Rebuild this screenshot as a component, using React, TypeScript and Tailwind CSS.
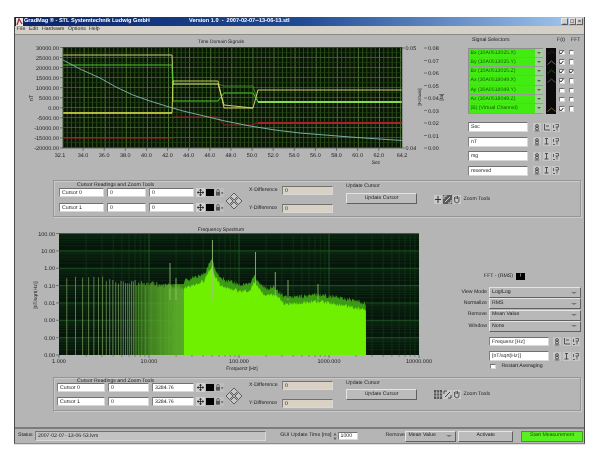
import React from 'react';

const rnd = (i: number) => {
  const s = Math.sin(i * 127.1) * 43758.5453;
  return s - Math.floor(s);
};

const range = (from: number, to: number, step: number) => {
  const out: number[] = [];
  for (let v = from; v <= to + 0.001; v += step) out.push(v);
  return out;
};

// Time chart helpers, all in page pixels
const timeX = (v: number) => 63 + (v - 32.1) * 10.56;
const timeTicks = [34, 36, 38, 40, 42, 44, 46, 48, 50, 52, 54, 56, 58, 60, 62];
const yLabels = ['30000.00', '25000.00', '20000.00', '15000.00', '10000.00', '5000.00', '0.00', '-5000.00', '-10000.00', '-15000.00', '-20000.00'];
const scaleB = ['0.08', '0.07', '0.06', '0.05', '0.04', '0.03', '0.02', '0.01', '0.00'];

function TimeChart() {
  return (
    <svg width="440" height="145" viewBox="15 35 440 145" className="shrink-0">
      <text x="221" y="43" textAnchor="middle" fontSize="4.9" fill="#222">Time Domain Signals</text>
      <rect x="63" y="47.5" width="339" height="100.5" fill="#0a1605" />
      {range(63, 402, 4.22).map((x, i) => (
        <line key={i} x1={x} x2={x} y1="47.5" y2="148" stroke={i % 5 === 0 ? '#6c9c44' : '#3c6622'} strokeWidth="0.7" />
      ))}
      {range(47.5, 148, 5).map((y, i) => (
        <line key={i} x1="63" x2="402" y1={y} y2={y} stroke={i % 2 === 0 ? '#3d7a2a' : '#1e4012'} strokeWidth="0.7" />
      ))}
      <g fill="none" strokeLinejoin="round">
        <polyline points="173,84 218,84 224,86 253,86 258,102 402,102" stroke="#3f8f20" strokeWidth="0.9" />
        <polyline points="63,55 172,55 173,84 218,84 224,105 253,108 258,90 402,90" stroke="#cfcf70" strokeWidth="1" />
        <polyline points="63,65 172,65 173,101 218,101 224,93 253,93 258,102 402,102" stroke="#48c828" strokeWidth="1" />
        <line x1="258" x2="402" y1="102" y2="102" stroke="#a8f060" strokeWidth="1.6" />
        <line x1="63" x2="172" y1="113" y2="113" stroke="#e8e850" strokeWidth="1.5" />
        <polyline points="172,113 173,81 218,81 224,108 253,108" stroke="#dcdc60" strokeWidth="0.9" />
        <line x1="63" x2="172" y1="138" y2="138" stroke="#a02020" strokeWidth="1" />
        <polyline points="174,117 218,117 224,125 253,125 257,123 402,123" stroke="#8c2020" strokeWidth="1" />
        <line x1="258" x2="402" y1="123" y2="123" stroke="#a82424" strokeWidth="2" />
        <polyline points="63,60 80,69 100,78 116,87 133,95 150,101 166,106 183,111 200,115 225,121 250,126 275,130 300,133 350,137 402,140.5" stroke="#7fbab4" strokeWidth="0.9" />
      </g>
      <rect x="63" y="47.5" width="339" height="100.5" fill="none" stroke="#222" strokeWidth="0.5" />
      {yLabels.map((l, i) => {
        const y = 47.5 + i * 10.05;
        return (
          <g key={l}>
            <line x1="60" x2="63" y1={y} y2={y} stroke="#444" strokeWidth="0.6" />
            <text x="59" y={y + 2} textAnchor="end" fontSize="5.5" fill="#222">{l}</text>
          </g>
        );
      })}
      <text x="60" y="156.5" textAnchor="middle" fontSize="5.5" fill="#222">32.1</text>
      <text x="402" y="156.5" textAnchor="middle" fontSize="5.5" fill="#222">64.2</text>
      {timeTicks.map((v) => (
        <g key={v}>
          <line x1={timeX(v)} x2={timeX(v)} y1="148" y2="151" stroke="#444" strokeWidth="0.6" />
          <text x={timeX(v)} y="156.5" textAnchor="middle" fontSize="5.5" fill="#222">{v.toFixed(1)}</text>
        </g>
      ))}
      <text x="376" y="164" textAnchor="middle" fontSize="5" fill="#222">Sec</text>
      <text transform="translate(33,98) rotate(-90)" textAnchor="middle" fontSize="5.5" fill="#222">nT</text>
      <line x1="402" x2="405" y1="48" y2="48" stroke="#444" strokeWidth="0.6" />
      <line x1="402" x2="405" y1="148" y2="148" stroke="#444" strokeWidth="0.6" />
      <text x="405.5" y="50" fontSize="5.5" fill="#222">0.05</text>
      <text x="405.5" y="150" fontSize="5.5" fill="#222">0.04</text>
      {scaleB.map((l, i) => (
        <g key={l}>
          <line x1="424" x2="427" y1={48 + i * 12.5} y2={48 + i * 12.5} stroke="#444" strokeWidth="0.6" />
          <text x="428" y={50 + i * 12.5} fontSize="5.5" fill="#222">{l}</text>
        </g>
      ))}
      <text transform="translate(421,97) rotate(-90)" textAnchor="middle" fontSize="4.4" fill="#222">[Hz/axis]</text>
      <text transform="translate(443,97) rotate(-90)" textAnchor="middle" fontSize="5" fill="#222">[ta]</text>
    </svg>
  );
}

// Spectrum chart helpers
const freqX = (f: number) => 59 + 90 * Math.log10(f);
const envelope: [number, number][] = [
  [184, 284], [195, 281], [204, 277], [209, 268], [212, 262], [215, 272], [220, 282], [230, 285], [240, 288], [250, 287],
  [254, 279], [258, 284], [265, 292], [275, 291], [285, 301], [300, 300], [318, 298], [340, 301], [366, 307],
];

function envelopeAt(x: number) {
  for (let i = 0; i < envelope.length - 1; i++) {
    const [x0, y0] = envelope[i];
    const [x1, y1] = envelope[i + 1];
    if (x >= x0 && x <= x1) return y0 + ((x - x0) / (x1 - x0)) * (y1 - y0);
  }
  return 307;
}

const xs = range(184, 366, 0.6);
const darkEdge = `184,355 ${xs.map((x, i) => `${x},${envelopeAt(x) - 1 - rnd(i) * 5}`).join(' ')} 366,355`;
const brightFill = `184,355 ${xs.map((x, i) => `${x},${envelopeAt(x) + 1.5 + rnd(i + 400) * 4}`).join(' ')} 366,355`;
const harmonics = range(4, 80, 1).map((k) => ({ x: freqX(0.305 * k), k })).filter((h) => h.x < 184);
const spikes: [number, number][] = [[212.5, 240], [255.5, 252], [170, 263], [275.3, 272], [288, 280], [318, 284], [176, 278]];
const freqLabels = ['100.00', '10.00', '1.00', '0.10', '0.01', '0.00', '0.00', '0.00'];
const freqTicks = ['1.000', '10.000', '100.000', '1000.000', '10000.000'];
const logSteps = [2, 3, 4, 5, 6, 7, 8, 9];

function SpectrumChart() {
  return (
    <svg width="440" height="160" viewBox="15 217 440 160" className="shrink-0">
      <defs>
        <linearGradient id="dense" x1="0" x2="1" y1="0" y2="0">
          <stop offset="0" stopColor="#2a6a10" stopOpacity="0" />
          <stop offset="1" stopColor="#3e9a10" stopOpacity="0.9" />
        </linearGradient>
      </defs>
      <text x="221" y="231" textAnchor="middle" fontSize="5" fill="#222">Frequency Spectrum</text>
      <rect x="59" y="233.5" width="360" height="121.5" fill="#06160a" />
      {[0, 1, 2, 3].map((d) =>
        logSteps.map((m) => {
          const x = 59 + 90 * (d + Math.log10(m));
          return <line key={`${d}-${m}`} x1={x} x2={x} y1="233.5" y2="355" stroke="#173f1a" strokeWidth="0.6" />;
        }),
      )}
      {[0, 1, 2, 3, 4, 5, 6].map((d) => (
        <g key={d}>
          {logSteps.map((m) => {
            const y = 233.5 + 17.36 * (d + 1 - Math.log10(m));
            return <line key={m} x1="59" x2="419" y1={y} y2={y} stroke="#12361a" strokeWidth="0.5" />;
          })}
          <line x1="59" x2="419" y1={233.5 + 17.36 * d} y2={233.5 + 17.36 * d} stroke="#2a6a2e" strokeWidth="0.7" />
        </g>
      ))}
      {[149, 239, 329].map((x) => (
        <line key={x} x1={x} x2={x} y1="233.5" y2="355" stroke="#2a6a2e" strokeWidth="0.7" />
      ))}
      <polygon points="125,285 184,284 184,355 125,355" fill="url(#dense)" />
      {harmonics.map(({ x, k }) => (
        <line key={k} x1={x} x2={x} y1={272 + (x - 59) * 0.1 + rnd(k) * 6} y2="355" stroke={k < 24 ? '#7fa860' : '#62b030'} strokeWidth="0.7" />
      ))}
      <polygon points={darkEdge} fill="#3c9a14" />
      <polygon points={brightFill} fill="#6ef000" />
      {spikes.map(([x, y]) => (
        <line key={x} x1={x} x2={x} y1={y} y2="300" stroke="#9cc878" strokeWidth="0.8" />
      ))}
      {freqLabels.map((l, i) => {
        const y = 233.5 + i * 17.36;
        return (
          <g key={i}>
            <line x1="56" x2="59" y1={y} y2={y} stroke="#444" strokeWidth="0.6" />
            <text x="55" y={y + 2} textAnchor="end" fontSize="5.5" fill="#222">{l}</text>
          </g>
        );
      })}
      {freqTicks.map((l, i) => (
        <g key={l}>
          <line x1={59 + i * 90} x2={59 + i * 90} y1="355" y2="358" stroke="#444" strokeWidth="0.6" />
          <text x={59 + i * 90} y="363" textAnchor="middle" fontSize="5.5" fill="#222">{l}</text>
        </g>
      ))}
      {[0, 1, 2, 3].map((d) =>
        logSteps.map((m) => {
          const x = 59 + 90 * (d + Math.log10(m));
          return <line key={`${d}-${m}`} x1={x} x2={x} y1="355" y2="357" stroke="#555" strokeWidth="0.5" />;
        }),
      )}
      <text x="242" y="370" textAnchor="middle" fontSize="5" fill="#222">Frequenz [Hz]</text>
      <text transform="translate(37,295) rotate(-90)" textAnchor="middle" fontSize="4.9" fill="#222">[nT/sqrt(Hz)]</text>
    </svg>
  );
}

const sunken = 'border-t border-l border-t-[#707070] border-l-[#808080] border-r border-b border-r-[#d8d8d8] border-b-[#d8d8d8]';
const raised = 'border-t border-l border-t-[#e4e4e4] border-l-[#e4e4e4] border-r border-b border-r-[#606060] border-b-[#606060]';

function Field({ value, className }: { value: string; className: string }) {
  return (
    <div className={`flex items-center px-[2px] pt-[1.5px] bg-white whitespace-nowrap ${sunken} ${className}`}>{value}</div>
  );
}

function Check({ on }: { on?: boolean }) {
  return (
    <div className={`w-[5.5px] h-[5.5px] bg-white flex items-center justify-center ${sunken}`}>
      {on && (
        <svg width="5" height="5" viewBox="0 0 5 5" className="shrink-0">
          <path d="M0.6 2.4 L2 3.9 L4.4 0.9" fill="none" stroke="#222" strokeWidth="1" />
        </svg>
      )}
    </div>
  );
}

// Small plot-legend buttons beside the axis name fields
function AxisButtons({ first }: { first?: boolean }) {
  return (
    <div className="flex gap-[1.5px] items-center">
      <svg width="8" height="9" viewBox="0 0 8 9" className="shrink-0">
        <rect width="8" height="9" fill="#c6c6c6" />
        <circle cx="4" cy="3" r="1.4" fill="none" stroke="#333" strokeWidth="0.8" />
        <circle cx="4" cy="5.6" r="1.5" fill="none" stroke="#333" strokeWidth="0.8" />
        <line x1="1.5" x2="6.5" y1="8" y2="8" stroke="#333" strokeWidth="0.7" />
      </svg>
      <svg width="8" height="9" viewBox="0 0 8 9" className="shrink-0">
        <rect width="8" height="9" fill="#c6c6c6" />
        <path d={first ? 'M1.5 1 V7 H7 M3 3 H6' : 'M2 1.5 H5 M3.5 1.5 V7 M1.5 7 H5.5'} fill="none" stroke="#333" strokeWidth="0.8" />
      </svg>
      <svg width="8" height="9" viewBox="0 0 8 9" className="shrink-0">
        <rect width="8" height="9" fill="#c6c6c6" />
        <path d="M1.5 2 V5 M3.5 1.5 H6.5 V4 H3.5 M5 4 V7.5 M1 7.5 H3" fill="none" stroke="#333" strokeWidth="0.7" />
      </svg>
    </div>
  );
}

function CursorTools() {
  return (
    <div className="flex items-center gap-[0.5px] ml-[2px] shrink-0">
      <svg width="9" height="9" viewBox="0 0 9 9" className="shrink-0">
        <rect width="9" height="9" fill="#d0d0d0" />
        <path d="M4.5 1 V8 M1 4.5 H8 M3.2 2.2 H5.8 M3.2 6.8 H5.8 M2.2 3.2 V5.8 M6.8 3.2 V5.8" stroke="#222" strokeWidth="0.8" fill="none" />
      </svg>
      <div className="w-[8px] h-[7px] bg-black mx-[0.5px]" />
      <svg width="9" height="9" viewBox="0 0 9 9" className="shrink-0">
        <rect width="9" height="9" fill="#bdbdbd" />
        <rect x="1" y="4" width="4" height="3.6" fill="#555" />
        <path d="M1.8 4 V2.6 A1.2 1.2 0 0 1 4.2 2.6 V4" fill="none" stroke="#444" strokeWidth="0.7" />
        <path d="M6 4.5 H8.4 L7.2 6 Z" fill="#333" />
      </svg>
    </div>
  );
}

function DiamondPad() {
  return (
    <svg width="20" height="18" viewBox="0 0 20 18" className="shrink-0 self-center">
      <g fill="#c8c8c8" stroke="#333" strokeWidth="0.7">
        <path d="M10 1 L13.5 4.5 L10 8 L6.5 4.5 Z" />
        <path d="M10 10 L13.5 13.5 L10 17 L6.5 13.5 Z" />
        <path d="M5.5 5.5 L9 9 L5.5 12.5 L2 9 Z" />
        <path d="M14.5 5.5 L18 9 L14.5 12.5 L11 9 Z" />
      </g>
    </svg>
  );
}

function ZoomTools({ grid }: { grid?: boolean }) {
  return (
    <div className="flex items-center gap-[1px] ml-[17px] mt-[7px] h-[9px] shrink-0">
      <svg width="8" height="9" viewBox="0 0 8 9" className="shrink-0">
        <rect width="8" height="9" fill={grid ? '#555' : '#c8c8c8'} />
        {grid ? (
          <path d="M0 3 H8 M0 6 H8 M2.7 0 V9 M5.4 0 V9" stroke="#ddd" strokeWidth="0.6" />
        ) : (
          <path d="M4 1 V8 M1 4.5 H7" stroke="#222" strokeWidth="0.9" />
        )}
      </svg>
      <svg width="9" height="9" viewBox="0 0 9 9" className="shrink-0">
        <rect width="9" height="9" fill={grid ? '#c8c8c8' : '#5a5a5a'} />
        <path d="M1 1 H4 M1 1 V4 M8 8 H5 M8 8 V5 M2 7 L7 2" stroke={grid ? '#222' : '#eee'} strokeWidth="0.8" fill="none" />
      </svg>
      <svg width="8" height="9" viewBox="0 0 8 9" className="shrink-0">
        <rect width="8" height="9" fill="#c8c8c8" />
        <path d="M1.5 4 V2 M3 4 V1 M4.5 4 V1 M6 4 V2 M1.5 4 Q1 8 4 8 Q6.5 8 6 4" stroke="#222" strokeWidth="0.7" fill="none" />
      </svg>
      <span className="ml-[1.5px] whitespace-nowrap">Zoom Tools</span>
    </div>
  );
}

function CursorGroup({
  rows,
  second,
}: {
  rows: [string, string, string][];
  second?: boolean;
}) {
  return (
    <div className={`ml-[38px] w-[528px] border border-[#969696] shadow-[inset_1px_1px_0_#cacaca,1px_1px_0_#cacaca] ${second ? 'h-[34px]' : 'h-[37px]'}`}>
      <div className={`ml-[23px] leading-[6px] ${second ? 'h-[5px]' : 'h-[7px] pt-[1px]'}`}>Cursor Readings and Zoom Tools</div>
      <div className={`flex ${second ? 'pl-[3px]' : 'pl-[5px]'}`}>
        <div className={`flex flex-col ${second ? 'gap-[5px]' : 'gap-[6px]'}`}>
          {rows.map((r) => (
            <div key={r[0]} className="flex items-center">
              <Field value={r[0]} className={`h-[9px] ${second ? 'w-[48px]' : 'w-[45px]'}`} />
              <Field value={r[1]} className={`h-[9px] ml-[3px] ${second ? 'w-[41px]' : 'w-[39px]'}`} />
              <Field value={r[2]} className={`h-[9px] ml-[3px] ${second ? 'w-[42px]' : 'w-[45px]'}`} />
              <CursorTools />
            </div>
          ))}
        </div>
        <DiamondPad />
        <div className="flex flex-col ml-[5px] -mt-[2px] gap-[9px]">
          {['X-Difference', 'Y-Difference'].map((l) => (
            <div key={l} className="flex items-center h-[9px]">
              <span className="w-[33px] whitespace-nowrap">{l}</span>
              <div className={`w-[51px] h-[9px] bg-[#d9d2c4] px-[2px] pt-[1.5px] flex items-center ${sunken}`}>0</div>
            </div>
          ))}
        </div>
        <div className={`flex flex-col ml-[13px] ${second ? '-mt-[2px]' : '-mt-[4px]'}`}>
          <div className={`whitespace-nowrap ${second ? 'h-[8px]' : 'h-[9px]'}`}>Update Cursor</div>
          <div className={`w-[71px] h-[11px] bg-[#bcbcbc] flex items-center justify-center ${raised}`}>Update Cursor</div>
        </div>
        <ZoomTools grid={second} />
      </div>
    </div>
  );
}

const channels = [
  'Bx (10A0513025.X)',
  'By (10A0513025.Y)',
  'Bz (10A0513025.Z)',
  'Ax (30A0518049.X)',
  'Ay (30A0518049.Y)',
  'Az (30A0518049.Z)',
  '(B) (Virtual Channel)',
];
const legendColors = ['#5a1010', '#8c8c60', '#2f5a24', '#4a7a50', '', '', '#8a7a50'];
const timeChecked = [true, true, true, true, false, false, true];
const fftChecked = [false, false, true, false, false, false, false];

function SignalPanel() {
  return (
    <div className="flex flex-col pl-[13px] pt-[3px]">
      <div className="flex h-[10px]">
        <span className="ml-[4px] w-[85px]">Signal Selectors</span>
        <span className="w-[14px]">F(t)</span>
        <span>FFT</span>
      </div>
      <div className="flex">
        <div className="flex flex-col w-[75px] bg-[#8f8f8f] p-[0.5px]">
          {channels.map((c) => (
            <div key={c} className="h-[9.3px] flex border-b border-[#9a9a9a]">
              <span className="flex-1 bg-[#42ec12] text-[#14600a] pl-[2px] leading-[8.5px] whitespace-nowrap overflow-hidden">{c}</span>
              <span className="w-[8px] bg-[#a8c8a0] flex items-center justify-center">
                <span className="w-0 h-0 border-x-[2px] border-x-transparent border-t-[2px] border-t-[#4a6a4a]" />
              </span>
            </div>
          ))}
        </div>
        <div className="ml-[3px] w-[10px] bg-[#0a0a0a] flex flex-col">
          {legendColors.map((col, i) => (
            <div key={i} className="h-[9.4px] flex items-center justify-center">
              {col && (
                <svg width="9" height="5" viewBox="0 0 9 5" className="shrink-0">
                  <path d="M0.5 4.5 L4.5 1 L8.5 4.5" fill="none" stroke={col} strokeWidth="0.8" />
                </svg>
              )}
            </div>
          ))}
        </div>
        <div className="flex flex-col ml-[3px]">
          {channels.map((c, i) => (
            <div key={c} className="h-[9.4px] flex items-center gap-[4px]">
              <Check on={timeChecked[i]} />
              <Check on={fftChecked[i]} />
            </div>
          ))}
        </div>
      </div>
      <div className="flex flex-col gap-[4.5px] mt-[8px]">
        {['Sec', 'nT', 'mg', 'reserved'].map((n, i) => (
          <div key={n} className="flex items-center">
            <Field value={n} className="w-[60px] h-[10px]" />
            <div className="ml-[5px]">
              <AxisButtons first={i === 0} />
            </div>
          </div>
        ))}
      </div>
    </div>
  );
}

function Dropdown({ value, className }: { value: string; className: string }) {
  return (
    <div className={`flex items-center justify-between bg-[#b8b8b8] pl-[2px] pr-[3px] ${raised} ${className}`}>
      <span>{value}</span>
      <span className="w-0 h-0 border-x-[3px] border-x-transparent border-t-[2px] border-t-[#777]" />
    </div>
  );
}

function FftPanel() {
  const rows: [string, string][] = [
    ['View Mode', 'Log/Log'],
    ['Normalize', 'RMS'],
    ['Remove', 'Mean Value'],
    ['Window', 'None'],
  ];
  return (
    <div className="flex flex-col pt-[56px]">
      <div className="flex items-center h-[7px] ml-[29px]">
        <span className="w-[32px] whitespace-nowrap">FFT - (RMS)</span>
        <div className="w-[9px] h-[7px] bg-black text-white flex items-center justify-center leading-none">!</div>
      </div>
      <div className="flex flex-col gap-[0.3px] mt-[7px]">
        {rows.map(([l, v]) => (
          <div key={l} className="flex items-center">
            <span className="w-[32px] text-right whitespace-nowrap">{l}</span>
            <Dropdown value={v} className="ml-[2px] w-[92px] h-[11px]" />
          </div>
        ))}
      </div>
      <div className="flex flex-col gap-[5px] ml-[34px] mt-[5px]">
        {['Frequenz [Hz]', '[nT/sqrt(Hz)]'].map((n, i) => (
          <div key={n} className="flex items-center">
            <Field value={n} className="w-[60px] h-[9.5px]" />
            <div className="ml-[4px]">
              <AxisButtons first={i === 0} />
            </div>
          </div>
        ))}
      </div>
      <div className="flex items-center ml-[35px] mt-[3px]">
        <Check />
        <span className="ml-[6px]">Restart Averaging</span>
      </div>
    </div>
  );
}

export default function App() {
  return (
    <div className="w-[594px] h-[455px] bg-white pt-[17px] pl-[14px] overflow-hidden font-['Liberation_Sans',Arial,sans-serif] text-[5.2px] text-[#222] leading-none [text-rendering:geometricPrecision] blur-[0.25px]">
      <div className="w-[571px] h-[427px] flex flex-col bg-[#b5b5b5] border-x border-b border-x-[#4a4a4a] border-b-[#8a8a8a] shadow-[0_1px_0_#e0e0e0]">
        {/* Title bar */}
        <div className="h-[9px] shrink-0 flex items-center bg-gradient-to-r from-[#0a246a] via-[#1f4a94] to-[#a6caf0] text-white font-bold text-[5.6px]">
          <svg width="7" height="8" viewBox="0 0 7 8" className="shrink-0 ml-[1px]">
            <rect width="7" height="8" fill="#e8e8e8" />
            <path d="M1 7 L3 1 L6 6" fill="none" stroke="#a02030" strokeWidth="1.2" />
          </svg>
          <span className="ml-[1px] w-[165px] whitespace-nowrap">GradMag ® - STL Systemtechnik Ludwig GmbH</span>
          <span className="whitespace-pre">Version 1.0  -  2007-02-07--13-06-13.stl</span>
          <div className="ml-auto flex gap-[0.5px] mr-[1px]">
            {['_', '□', '×'].map((g) => (
              <span key={g} className={`w-[7px] h-[7px] bg-[#d4d0c8] text-black flex items-center justify-center text-[6px] font-normal ${raised}`}>{g}</span>
            ))}
          </div>
        </div>
        {/* Menu */}
        <div className="h-[9px] shrink-0 flex items-center bg-[#d4d0c8] border-b border-[#8c8c8c]">
          {[
            ['File', 'w-[12px] ml-[2px]'],
            ['Edit', 'w-[13px]'],
            ['Hardware', 'w-[26px]'],
            ['Options', 'w-[21px]'],
            ['Help', 'w-[12px]'],
          ].map(([m, c]) => (
            <span key={m} className={c}>{m}</span>
          ))}
        </div>
        {/* Time domain */}
        <div className="h-[145px] shrink-0 flex">
          <TimeChart />
          <SignalPanel />
        </div>
        <CursorGroup
          rows={[
            ['Cursor 0', '0', '0'],
            ['Cursor 1', '0', '0'],
          ]}
        />
        {/* Frequency domain */}
        <div className="h-[160px] shrink-0 flex">
          <SpectrumChart />
          <FftPanel />
        </div>
        <CursorGroup
          second
          rows={[
            ['Cursor 0', '0', '3284.76'],
            ['Cursor 1', '0', '3284.76'],
          ]}
        />
        {/* Status bar */}
        <div className="mt-[16px] flex-1 flex items-center border-t-2 border-[#7c7c7c] pl-[3px] pr-[1px]">
          <span className="w-[17px]">Status</span>
          <div className={`w-[232px] h-[10px] bg-[#c2c2c2] flex items-center px-[2px] pt-[1.5px] ${sunken}`}>2007-02-07--13-06-53.lvm</div>
          <span className="ml-[14px] w-[53px] whitespace-nowrap">GUI Update Time [ms]</span>
          <svg width="4" height="9" viewBox="0 0 4 9" className="shrink-0">
            <path d="M2 0.5 L3.6 3.5 H0.4 Z M2 8.5 L3.6 5.5 H0.4 Z" fill="#666" />
          </svg>
          <Field value="1000" className="w-[20px] h-[8.5px] ml-[0.5px]" />
          <span className="ml-[28px] w-[20px]">Remove</span>
          <Dropdown value="Mean Value" className="w-[51px] h-[11px]" />
          <div className={`ml-[2px] w-[55px] h-[11px] bg-[#bcbcbc] flex items-center justify-center ${raised}`}>Activate</div>
          <div className="ml-[8px] w-[62px] h-[11px] bg-[#58f020] flex items-center justify-center text-[#1c4a10] border border-[#3ea018]">Start Measurement</div>
        </div>
      </div>
    </div>
  );
}
